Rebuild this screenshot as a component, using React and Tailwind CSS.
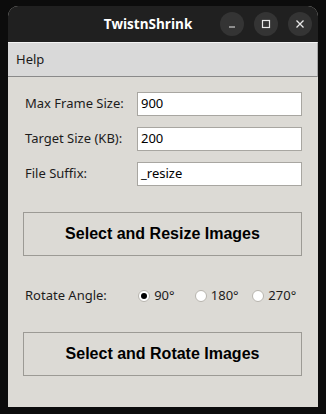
import { useState } from 'react'

const FIELDS = [
  { label: 'Max Frame Size:', value: '900' },
  { label: 'Target Size (KB):', value: '200' },
  { label: 'File Suffix:', value: '_resize' },
]

const ANGLES = [
  { label: '90°', pad: 'w-[57px]' },
  { label: '180°', pad: 'w-[58px]' },
  { label: '270°', pad: 'w-[50px]' },
]

function WinButton({ children }) {
  return (
    <div className="w-[24px] h-[24px] rounded-full bg-[#343434] flex items-center justify-center text-[#e8e8e8]">
      {children}
    </div>
  )
}

function Radio({ checked }) {
  return (
    <span className="w-[12px] h-[12px] rounded-full bg-white border border-[#b8b5ae] flex items-center justify-center">
      {checked && <span className="w-[6px] h-[6px] rounded-full bg-black" />}
    </span>
  )
}

export default function App() {
  const [angle, setAngle] = useState(0)

  return (
    <div className="w-[326px] h-[414px] bg-[#0c0c0c] pt-[6px] px-[8px] font-['Noto_Sans',sans-serif]">
      <div className="w-[310px] h-[401px] flex flex-col rounded-t-[10px] overflow-hidden bg-[#dcdad5]">
        {/* title bar */}
        <div className="h-[36px] bg-[#202020] flex items-center relative shrink-0">
          <div className="absolute left-0 right-[30px] text-center text-white text-[13.5px] font-bold font-['Open_Sans',sans-serif]">
            TwistnShrink
          </div>
          <div className="ml-auto mr-[6px] flex gap-[10px] relative">
            <WinButton>
              <svg width="10" height="10" viewBox="0 0 10 10">
                <path d="M2 8 H8" stroke="currentColor" strokeWidth="1.2" />
              </svg>
            </WinButton>
            <WinButton>
              <svg width="10" height="10" viewBox="0 0 10 10">
                <rect x="1.5" y="1.5" width="7" height="7" fill="none" stroke="currentColor" strokeWidth="1.2" />
              </svg>
            </WinButton>
            <WinButton>
              <svg width="10" height="10" viewBox="0 0 10 10">
                <path d="M1.5 1.5 L8.5 8.5 M8.5 1.5 L1.5 8.5" stroke="currentColor" strokeWidth="1.3" />
              </svg>
            </WinButton>
          </div>
        </div>

        {/* menu bar */}
        <div className="h-[35px] shrink-0 bg-[#d9d9d9] border-t border-t-[#f4f4f4] border-b border-b-[#8a8a8a] border-r border-r-[#a8a8a8] flex items-center pl-[8px] text-[13px] text-[#1a1a1a]">
          Help
        </div>

        {/* form */}
        <div className="flex flex-col pt-[15px] pl-[15px] pr-[16px] text-[13px] text-[#1c1c1c]">
          <div className="flex flex-col gap-[11px]">
            {FIELDS.map((f) => (
              <div key={f.label} className="flex items-center h-[24px]">
                <span className="w-[114px] pl-[2px]">{f.label}</span>
                <div className="flex-1 h-[24px] bg-white border border-[#a8a6a1] flex items-center pl-[3px] text-[13px] text-black">
                  {f.value}
                </div>
              </div>
            ))}
          </div>

          <button className="mt-[26px] h-[44px] border border-[#9c9a95] bg-[#dcdad5] text-[16px] font-bold text-black font-['Liberation_Sans',sans-serif]">
            Select and Resize Images
          </button>

          <div className="mt-[30px] h-[20px] flex items-center">
            <span className="w-[116px] pl-[2px]">Rotate Angle:</span>
            {ANGLES.map((a, i) => (
              <label
                key={a.label}
                onClick={() => setAngle(i)}
                className={`flex items-center gap-[4px] cursor-pointer ${a.pad}`}
              >
                <Radio checked={angle === i} />
                <span>{a.label}</span>
              </label>
            ))}
          </div>

          <button className="mt-[26px] h-[44px] border border-[#9c9a95] bg-[#dcdad5] text-[16px] font-bold text-black font-['Liberation_Sans',sans-serif]">
            Select and Rotate Images
          </button>
        </div>
      </div>
    </div>
  )
}
